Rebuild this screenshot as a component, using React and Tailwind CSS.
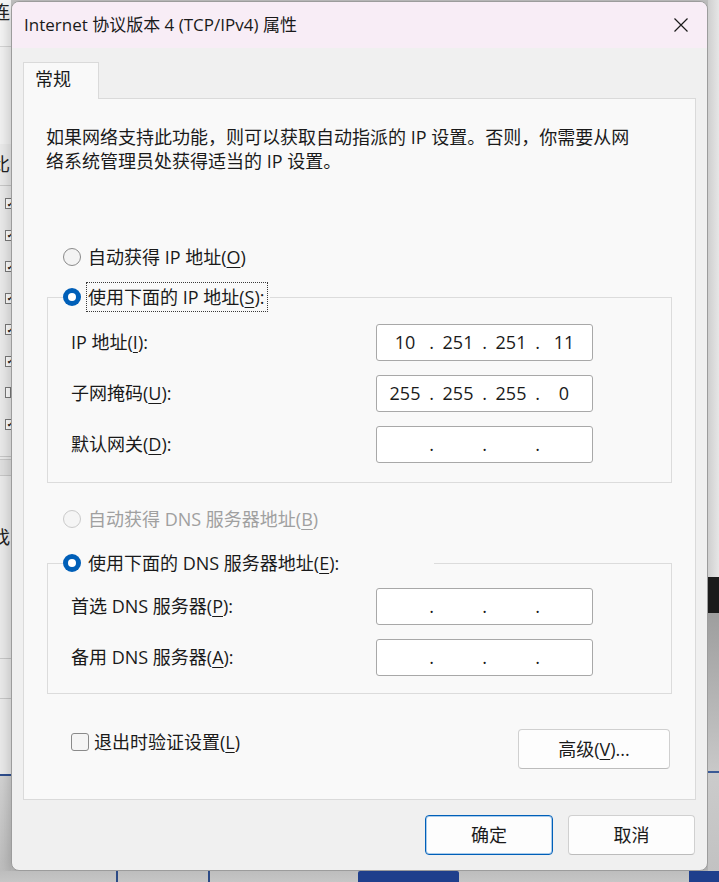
import React from "react";

function U({ children }) {
  return <span className="underline decoration-1 underline-offset-[3px]">{children}</span>;
}

function Radio({ checked, disabled }) {
  if (checked) {
    return (
      <span className="flex h-[18px] w-[18px] shrink-0 items-center justify-center rounded-full bg-[#005fb8]">
        <span className="h-[8px] w-[8px] rounded-full bg-white" />
      </span>
    );
  }
  return (
    <span
      className={
        disabled
          ? "h-[18px] w-[18px] shrink-0 rounded-full border border-[#cacaca] bg-[#f5f5f5]"
          : "h-[18px] w-[18px] shrink-0 rounded-full border border-[#8a8a8a] bg-[#f3f3f3]"
      }
    />
  );
}

function IpField({ parts = ["", "", "", ""] }) {
  return (
    <div className="flex h-[37px] w-[217px] items-center rounded-[3px] border border-[#a8a8a8] bg-white pl-[10px] text-[18px] text-[#1a1a1a]">
      {parts.map((p, i) => (
        <React.Fragment key={i}>
          {i > 0 && <span className="w-[17px] text-center">.</span>}
          <span className="w-[36px] text-center">{p}</span>
        </React.Fragment>
      ))}
    </div>
  );
}

function FieldRow({ label, parts }) {
  return (
    <div className="flex items-center">
      <div className="w-[305px] whitespace-nowrap">{label}</div>
      <IpField parts={parts} />
    </div>
  );
}

function GroupBox({ headWidth, head, children, className }) {
  return (
    <div className={"ml-[23px] w-[625px] " + className}>
      <div className="flex h-[30px]">
        <div className="h-[15px] w-[16px] self-end border-l border-t border-[#dcdcdc]" />
        <div className="flex items-center" style={{ width: headWidth }}>
          {head}
        </div>
        <div className="h-[15px] flex-1 self-end border-r border-t border-[#dcdcdc]" />
      </div>
      <div className="flex flex-col gap-[14px] border-x border-b border-[#dcdcdc] pl-[23px]">
        {children}
      </div>
    </div>
  );
}

function Check() {
  return (
    <span className="flex h-[11px] w-[11px] shrink-0 items-center justify-center border border-[#7a7a7a] bg-white text-[8px] leading-none text-[#222]">
      ✔
    </span>
  );
}

function LeftStrip() {
  const rows = [205, 236, 266, 296, 328, 360, 392, 424];
  return (
    <div className="flex h-full w-[11px] shrink-0 flex-col overflow-hidden bg-[#ececec] text-[18px] text-[#222]">
      <div className="h-[47px] border-b border-[#d6d6d6] bg-[#f6f6f6] pt-[1px]">
        <span className="-ml-[8px] block leading-[22px]">连</span>
      </div>
      <div className="h-[97px] bg-[#f3f3f3]" />
      <div className="h-[42px] border-b border-[#c9c9c9]">
        <span className="-ml-[8px] block leading-[40px]">比</span>
      </div>
      <div className="flex h-[270px] flex-col pt-[12px]">
        {rows.map((r, i) => (
          <div key={r} className="flex h-[31.5px] items-start pl-[5px]">
            {i === 6 ? (
              <span className="h-[11px] w-[11px] border border-[#7a7a7a] bg-white" />
            ) : (
              <Check />
            )}
          </div>
        ))}
      </div>
      <div className="h-[3px] border-t border-[#c9c9c9]" />
      <div className="h-[16px] border-t border-[#c9c9c9] bg-[#e2e2e2]" />
      <div className="h-[41px] border-t border-[#c9c9c9]" />
      <div className="h-[30px] pt-[6px]">
        <span className="-ml-[8px] block leading-[30px]">找</span>
      </div>
      <div className="h-[113px] border-b border-[#c9c9c9]" />
      <div className="h-[40px] border-b border-[#c9c9c9]" />
      <div className="h-[77px] border-b-2 border-[#2f4f8f]" />
      <div className="flex-1 bg-gradient-to-b from-[#d4d4d4] to-[#bfbfbf]" />
    </div>
  );
}

function RightStrip() {
  return (
    <div className="flex h-full w-[11px] shrink-0 flex-col">
      <div className="h-[577px] bg-gradient-to-r from-[#cfcfcf] to-[#e6e6e6]" />
      <div className="h-[36px] bg-[#1b1b1b]" />
      <div className="h-[160px] border-b-2 border-[#3a5a96] bg-gradient-to-b from-[#9e9e9e] to-[#c8c8c8]" />
      <div className="flex-1 bg-gradient-to-b from-[#cbcbcb] to-[#c2c2c2]" />
    </div>
  );
}

export default function App() {
  return (
    <div className="flex h-[882px] w-[719px] flex-col overflow-hidden bg-[#c4c4c4] [font-family:'Open_Sans','Noto_Sans_CJK_SC',sans-serif] text-[#1a1a1a]">
      <div className="flex h-[871px]">
        <LeftStrip />
        <div className="mt-[1px] flex h-[870px] w-[697px] shrink-0 flex-col overflow-hidden rounded-[8px] border border-[#9c9c9c] bg-[#f0f0f0] shadow-[0_4px_16px_rgba(0,0,0,0.25)]">
          {/* title bar */}
          <div className="flex h-[46px] shrink-0 items-center justify-between bg-[#f8edf6] pb-[1px] pl-[12px] pr-[15px]">
            <span className="text-[17px]">Internet 协议版本 4 (TCP/IPv4) 属性</span>
            <svg width="16" height="16" viewBox="0 0 16 16" className="mr-[3px]">
              <path d="M1.5 1.5 L14.5 14.5 M14.5 1.5 L1.5 14.5" stroke="#1a1a1a" strokeWidth="1.2" fill="none" />
            </svg>
          </div>

          {/* body */}
          <div className="flex flex-1 flex-col px-[11px] text-[18px]">
            <div className="relative z-10 -mb-[1px] mt-[14px] flex h-[37px] w-[76px] items-center border-x border-t border-[#dadada] bg-[#f9f9f9] pb-[3px] pl-[11px]">
              常规
            </div>
            <div className="flex h-[702px] flex-col border border-[#dadada] bg-[#f9f9f9]">
              <div className="whitespace-nowrap pl-[22px] pt-[26px] leading-[24px]">
                <div>如果网络支持此功能，则可以获取自动指派的 IP 设置。否则，你需要从网</div>
                <div>络系统管理员处获得适当的 IP 设置。</div>
              </div>

              <div className="mt-[69px] flex h-[30px] items-center pl-[39px]">
                <Radio />
                <span className="ml-[7px] whitespace-nowrap">
                  自动获得 IP 地址(<U>O</U>)
                </span>
              </div>

              <GroupBox
                className="mt-[10px]"
                headWidth={207}
                head={
                  <>
                    <Radio checked />
                    <span className="ml-[5px] flex h-[30px] items-center whitespace-nowrap border border-dotted border-[#3a3a3a] pl-[1px] pr-[3px]">
                      使用下面的 IP 地址(<U>S</U>):
                    </span>
                  </>
                }
              >
                <div className="mt-[12px]">
                  <FieldRow label={<>IP 地址(<U>I</U>):</>} parts={["10", "251", "251", "11"]} />
                </div>
                <FieldRow label={<>子网掩码(<U>U</U>):</>} parts={["255", "255", "255", "0"]} />
                <div className="mb-[19px]">
                  <FieldRow label={<>默认网关(<U>D</U>):</>} />
                </div>
              </GroupBox>

              <div className="mt-[21px] flex h-[30px] items-center pl-[39px] text-[#a0a0a0]">
                <Radio disabled />
                <span className="ml-[7px] whitespace-nowrap">
                  自动获得 DNS 服务器地址(<U>B</U>)
                </span>
              </div>

              <GroupBox
                className="mt-[14px]"
                headWidth={371}
                head={
                  <>
                    <Radio checked />
                    <span className="ml-[7px] whitespace-nowrap">
                      使用下面的 DNS 服务器地址(<U>E</U>):
                    </span>
                  </>
                }
              >
                <div className="mt-[10px]">
                  <FieldRow label={<>首选 DNS 服务器(<U>P</U>):</>} />
                </div>
                <div className="mb-[17px]">
                  <FieldRow label={<>备用 DNS 服务器(<U>A</U>):</>} />
                </div>
              </GroupBox>

              <div className="ml-[47px] mr-[25px] mt-[35px] flex items-start justify-between">
                <div className="flex h-[26px] items-center">
                  <span className="h-[18px] w-[18px] rounded-[3px] border border-[#8a8a8a] bg-[#f5f5f5]" />
                  <span className="ml-[5px] whitespace-nowrap">
                    退出时验证设置(<U>L</U>)
                  </span>
                </div>
                <button className="flex h-[40px] w-[152px] items-center justify-center rounded-[4px] border border-[#d0d0d0] border-b-[#bcbcbc] bg-[#fdfdfd]">
                  高级(<U>V</U>)...
                </button>
              </div>
            </div>

            <div className="mt-[15px] flex justify-end gap-[15px] pr-[1px]">
              <button className="flex h-[40px] w-[128px] items-center justify-center rounded-[4px] border border-[#005fb8] bg-[#fdfdfd] shadow-[inset_0_0_0_1px_#a9cbeb]">
                确定
              </button>
              <button className="flex h-[40px] w-[127px] items-center justify-center rounded-[4px] border border-[#d0d0d0] border-b-[#bcbcbc] bg-[#fdfdfd]">
                取消
              </button>
            </div>
          </div>
        </div>
        <RightStrip />
      </div>

      {/* bottom strip of the window behind */}
      <div className="flex h-[11px] bg-gradient-to-b from-[#bdbdbd] to-[#c6c6c6]">
        <div className="w-[116px]" />
        <div className="w-[2px] bg-[#2c4a85]" />
        <div className="w-[90px]" />
        <div className="w-[2px] bg-[#2c4a85]" />
        <div className="w-[148px]" />
        <div className="w-[101px] rounded-t-[2px] bg-[#1f3f8c]" />
        <div className="flex-1" />
        <div className="w-[30px] bg-[#1f3f8c]" />
      </div>
    </div>
  );
}
